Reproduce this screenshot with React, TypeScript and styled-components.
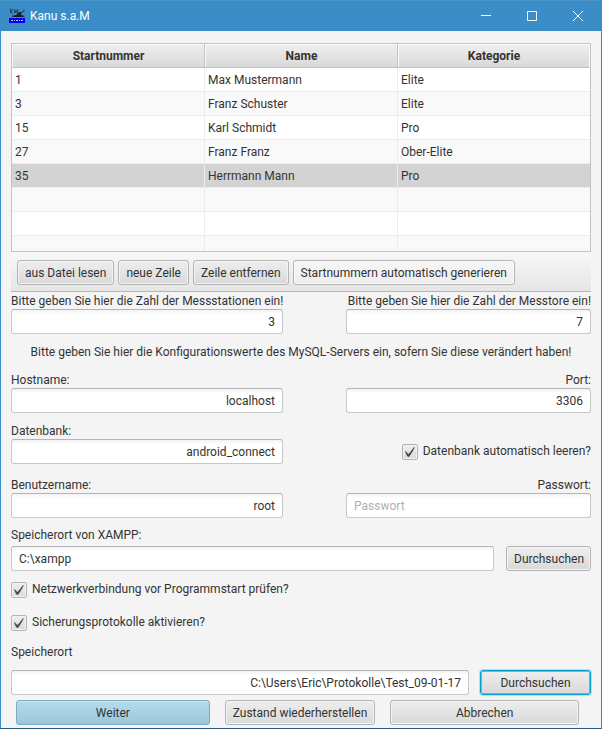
import React, { useState } from "react";
import styled, { createGlobalStyle, css } from "styled-components";

const GlobalStyle = createGlobalStyle`
  *, *::before, *::after { box-sizing: border-box; }
  body {
    margin: 0;
    background: #f4f4f4;
    color: #333;
    font: 12px/17px Roboto, sans-serif;
  }
  button, input { font: inherit; color: inherit; margin: 0; }
`;

const Window = styled.div`
  display: flex;
  flex-direction: column;
  min-height: 100vh;
  background: #f4f4f4;
  border: 1px solid #3a8dc7;
  border-top-color: #4b97cb;
  border-bottom-color: #29567a;
`;

const TitleBar = styled.header`
  display: flex;
  align-items: center;
  height: 30px;
  padding: 0 0 0 8px;
  background: #3a8dc7;
  color: #fff;
`;

const Title = styled.h1`
  flex: 1;
  margin: 0 0 0 5px;
  font-size: 12px;
  font-weight: 400;
`;

const CaptionButton = styled.button`
  display: grid;
  place-items: center;
  width: 46px;
  height: 30px;
  padding: 0;
  border: 0;
  background: transparent;
  color: #fff;
`;

const Content = styled.main`
  display: flex;
  flex-direction: column;
  padding: 12px 10px 3px;
`;

const Table = styled.table`
  width: 100%;
  table-layout: fixed;
  border-collapse: separate;
  border-spacing: 0;
  border: 1px solid #c3c3c3;
  background: #fff;
`;

const HeadCell = styled.th`
  height: 24px;
  padding: 2px 0 0 1px;
  font-weight: 700;
  background: linear-gradient(#efefef, #d9d9d9);
  border-right: 1px solid #c3c3c3;
  border-bottom: 1px solid #c3c3c3;
  box-shadow: inset 1px 1px 0 #fafafa;
  &:last-child { border-right-color: #fafafa; }
`;

const Row = styled.tr<{ $selected?: boolean; $short?: boolean }>`
  background: ${(p) => (p.$selected ? "#d3d3d3" : "#fff")};
  &:nth-child(even) { background: #f9f9f9; }
  td {
    height: ${(p) => (p.$short ? 15 : 24)}px;
    border-bottom-width: ${(p) => (p.$short ? 0 : 1)}px;
  }
`;

const Cell = styled.td`
  padding: 2px 3px 0;
  border: 0 solid #ededed;
  border-right-width: 1px;
  &:last-child { border-right-width: 0; }
`;

const ToolBar = styled.div`
  display: flex;
  gap: 4px;
  height: 40px;
  padding: 8px 6px 0;
  border-bottom: 1px solid #b5b5b5;
  background: linear-gradient(#f8f8f8, #e5e5e5);
`;

const Button = styled.button<{ $tone?: "light" | "primary" | "focused" }>`
  height: 25px;
  padding: 2px 7px 0;
  border: 1px solid #b4b4b4;
  border-radius: 3px;
  background: linear-gradient(#eeeeee, #d9d9d9);
  box-shadow: inset 0 0 0 1px #f3f3f3;
  line-height: 17px;
  white-space: nowrap;
  ${(p) => p.$tone === "light" && css`
    background: linear-gradient(#f6f6f6, #eeeeee);
    box-shadow: inset 0 0 0 1px #fafafa;
  `}
  ${(p) => p.$tone === "primary" && css`
    border-color: #7fa9bd;
    background: linear-gradient(#b4dcee, #9bc6da);
    box-shadow: inset 0 1px 0 #c5e5f2;
  `}
  ${(p) => p.$tone === "focused" && css`
    border-color: #039ed3;
    box-shadow: 0 0 0 1px #b3e0ee, inset 0 0 0 1px #5cbfe0;
  `}
`;

const Pair = styled.div<{ $top?: number }>`
  display: grid;
  grid-template-columns: minmax(0, 272fr) minmax(0, 245fr);
  column-gap: 63px;
  margin-top: ${(p) => p.$top ?? 0}px;
`;

const FieldBox = styled.div<{ $end?: boolean }>`
  display: flex;
  flex-direction: column;
  align-items: ${(p) => (p.$end ? "flex-end" : "flex-start")};
`;

const Label = styled.label`
  height: 17px;
  line-height: 19px;
  white-space: nowrap;
`;

const Input = styled.input<{ $left?: boolean }>`
  width: 100%;
  min-width: 0;
  height: 25px;
  padding: 0 7px;
  border: 1px solid #c8c8c8;
  border-top-color: #b5b5b5;
  border-radius: 3px;
  background: linear-gradient(#f2f2f2, #fff 4px);
  text-align: ${(p) => (p.$left ? "left" : "right")};
  &::placeholder { color: #b0b0b0; opacity: 1; }
`;

const Hint = styled.p`
  margin: 10px 0;
  text-align: center;
`;

const CheckLabel = styled.label<{ $top?: number; $end?: boolean }>`
  display: flex;
  align-items: center;
  gap: 5px;
  margin-top: ${(p) => p.$top ?? 0}px;
  justify-content: ${(p) => (p.$end ? "flex-end" : "flex-start")};
  line-height: 19px;
  white-space: nowrap;
`;

const CheckBox = styled.span`
  display: grid;
  place-items: center;
  width: 16px;
  height: 16px;
  input, svg { grid-area: 1 / 1; }
  input {
    appearance: none;
    width: 16px;
    height: 16px;
    border: 1px solid #b4b4b4;
    border-radius: 2px;
    background: linear-gradient(#eeeeee, #dadada);
    box-shadow: inset 0 0 0 1px #f3f3f3;
  }
  svg { pointer-events: none; }
  input:not(:checked) + svg { visibility: hidden; }
`;

const BrowseLine = styled.div<{ $gap: number }>`
  display: flex;
  gap: ${(p) => p.$gap}px;
`;

const BrowseButton = styled(Button)<{ $wide?: boolean }>`
  flex: none;
  width: ${(p) => (p.$wide ? 111 : 85)}px;
`;

const SectionLabel = styled(Label)<{ $top: number; $bottom: number }>`
  margin: ${(p) => p.$top}px 0 ${(p) => p.$bottom}px;
`;

const Footer = styled.footer`
  display: grid;
  grid-template-columns: 194fr 149fr 189fr;
  gap: 15px;
  margin-top: 5px;
  padding: 0 12px 0 5px;
`;

const AppIcon = () => (
  <svg width="16" height="16" viewBox="0 0 16 16" aria-hidden="true">
    <path d="M1.500 0.500v5M4 1L2 3l2 3M5 1l1 4 1-3 1 3 1-4" stroke="#1d3442" strokeWidth="0.800" fill="none" />
    <path d="M15.500 2l-4 4-4 3" stroke="#101820" fill="none" />
    <path d="M2 8l5-1 3-3 2 0v3l4 1-2 1H5z" fill="#14202a" />
    <rect y="10" width="16" height="5" fill="#0000fa" />
    <path d="M2 12.500h2M5 12.500h1M7 12.500h2M10 12.500h1M12 12.500h2" stroke="#b9b9ff" fill="none" />
  </svg>
);

const Check = ({ id, label, top, end }: { id: string; label: string; top?: number; end?: boolean }) => {
  const [on, setOn] = useState(true);
  return (
    <CheckLabel htmlFor={id} $top={top} $end={end}>
      <CheckBox>
        <input id={id} type="checkbox" checked={on} onChange={() => setOn(!on)} />
        <svg width="10" height="10" viewBox="-0.5 -1 17 17.2" aria-hidden="true">
          <path
            fill="#4a4a4a"
            d="M-0.25,6.083c0.843-0.758,4.583,4.833,5.75,4.833S14.5-1.5,15.917-0.917c1.292,0.532-8.75,17.083-10.5,17.083C3,16.167-1.083,6.833-0.25,6.083z"
          />
        </svg>
      </CheckBox>
      {label}
    </CheckLabel>
  );
};

type FieldProps = { id: string; label: string; value?: string; placeholder?: string; end?: boolean; type?: string };

const Field = ({ id, label, value, placeholder, end, type = "text" }: FieldProps) => (
  <FieldBox $end={end}>
    <Label htmlFor={id}>{label}</Label>
    <Input id={id} type={type} defaultValue={value} placeholder={placeholder} $left={!!placeholder} />
  </FieldBox>
);

const starters = [
  ["1", "Max Mustermann", "Elite"],
  ["3", "Franz Schuster", "Elite"],
  ["15", "Karl Schmidt", "Pro"],
  ["27", "Franz Franz", "Ober-Elite"],
  ["35", "Herrmann Mann", "Pro"],
  ["", "", ""],
  ["", "", ""],
  ["", "", ""],
];

export default function App() {
  return (
    <>
      <GlobalStyle />
      <Window>
        <TitleBar>
          <AppIcon />
          <Title>Kanu s.a.M</Title>
          <CaptionButton aria-label="Minimieren">
            <svg width="10" height="10"><path d="M0 4.5h10" stroke="currentColor" /></svg>
          </CaptionButton>
          <CaptionButton aria-label="Maximieren">
            <svg width="10" height="10"><path d="M.5.5h9v9h-9z" stroke="currentColor" fill="none" /></svg>
          </CaptionButton>
          <CaptionButton aria-label="Schließen">
            <svg width="10" height="10"><path d="M0 0l10 10M10 0L0 10" stroke="currentColor" /></svg>
          </CaptionButton>
        </TitleBar>
        <Content>
          <Table>
            <colgroup>
              <col width="193" />
              <col width="193" />
              <col />
            </colgroup>
            <thead>
              <tr>
                <HeadCell>Startnummer</HeadCell>
                <HeadCell>Name</HeadCell>
                <HeadCell>Kategorie</HeadCell>
              </tr>
            </thead>
            <tbody>
              {starters.map((row, i) => (
                <Row key={i} $selected={i === 4} $short={i === starters.length - 1}>
                  {row.map((text, c) => <Cell key={c}>{text}</Cell>)}
                </Row>
              ))}
            </tbody>
          </Table>
          <ToolBar>
            <Button>aus Datei lesen</Button>
            <Button>neue Zeile</Button>
            <Button>Zeile entfernen</Button>
            <Button $tone="light">Startnummern automatisch generieren</Button>
          </ToolBar>
          <Pair>
            <Field id="stations" label="Bitte geben Sie hier die Zahl der Messstationen ein!" value="3" />
            <Field id="gates" label="Bitte geben Sie hier die Zahl der Messtore ein!" value="7" end />
          </Pair>
          <Hint>Bitte geben Sie hier die Konfigurationswerte des MySQL-Servers ein, sofern Sie diese verändert haben!</Hint>
          <Pair>
            <Field id="host" label="Hostname:" value="localhost" />
            <Field id="port" label="Port:" value="3306" end />
          </Pair>
          <Pair $top={9}>
            <Field id="database" label="Datenbank:" value="android_connect" />
            <Check id="clear" label="Datenbank automatisch leeren?" top={17} end />
          </Pair>
          <Pair $top={12}>
            <Field id="user" label="Benutzername:" value="root" />
            <Field id="password" label="Passwort:" placeholder="Passwort" type="password" end />
          </Pair>
          <SectionLabel htmlFor="xampp" $top={8} $bottom={3}>Speicherort von XAMPP:</SectionLabel>
          <BrowseLine $gap={12}>
            <Input id="xampp" defaultValue="C:\xampp" $left />
            <BrowseButton>Durchsuchen</BrowseButton>
          </BrowseLine>
          <Check id="network" label="Netzwerkverbindung vor Programmstart prüfen?" top={9} />
          <Check id="logs" label="Sicherungsprotokolle aktivieren?" top={14} />
          <SectionLabel htmlFor="target" $top={11} $bottom={10}>Speicherort</SectionLabel>
          <BrowseLine $gap={11}>
            <Input id="target" defaultValue="C:\Users\Eric\Protokolle\Test_09-01-17" />
            <BrowseButton $tone="focused" $wide>Durchsuchen</BrowseButton>
          </BrowseLine>
          <Footer>
            <Button $tone="primary">Weiter</Button>
            <Button>Zustand wiederherstellen</Button>
            <Button>Abbrechen</Button>
          </Footer>
        </Content>
      </Window>
    </>
  );
}
